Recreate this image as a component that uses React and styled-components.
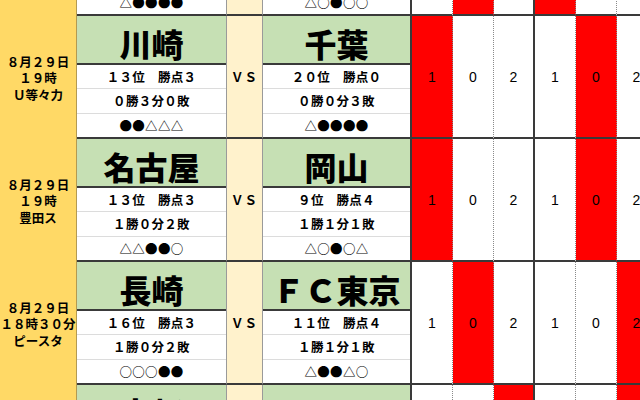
import React from "react";
import styled, { createGlobalStyle } from "styled-components";

const Global = createGlobalStyle`
  html, body { margin: 0; padding: 0; background: #fff; overflow: hidden; }
  body { width: 640px; height: 400px; }
  #root { height: 400px; overflow: hidden; }
`;

const JP = `"Noto Sans CJK JP", "Noto Sans", sans-serif`;
const DARK = "#3a3a3a";

const Sheet = styled.div`
  margin-top: -107px;
  width: 660px;
  display: flex;
  flex-direction: column;
  font-family: ${JP};
  color: #000;
`;

const Block = styled.div`
  display: grid;
  grid-template-columns: 77px 150px 36px 149px repeat(6, 41px);
  height: 123px;
`;

const DateCell = styled.div`
  background: #ffd966;
  border-right: 1px solid #b39a52;
  display: flex;
  flex-direction: column;
  align-items: center;
  justify-content: center;
  font-weight: 700;
  font-size: 12.5px;
  line-height: 16.5px;
  white-space: nowrap;
  overflow: hidden;
  padding-top: 2px;
`;

const TeamBox = styled.div`
  display: flex;
  flex-direction: column;
  border-right: ${(p) => (p.$strong ? `2px solid ${DARK}` : "1px solid #9a9a9a")};
  border-bottom: 2px solid ${DARK};
  min-width: 0;
`;

const NameCell = styled.div`
  height: 49px;
  flex: none;
  background: #c6e0b4;
  border-bottom: 2px solid ${DARK};
  display: flex;
  align-items: center;
  justify-content: center;
  padding-top: 7px;
  box-sizing: border-box;
  font-size: 32px;
  font-weight: 900;
  line-height: 1;
  white-space: nowrap;
  overflow: hidden;
`;

const InfoRow = styled.div`
  flex: 1;
  display: flex;
  align-items: center;
  justify-content: center;
  font-size: 12.5px;
  font-weight: 700;
  letter-spacing: 0.3px;
  white-space: nowrap;
  background: #fff;
  & + & { border-top: 1px solid #dcdcdc; }
`;

const VsCell = styled.div`
  background: #fff2cc;
  border-right: 1px solid #9a9a9a;
  border-bottom: 2px solid ${DARK};
  display: flex;
  align-items: center;
  justify-content: center;
  font-size: 12.5px;
  font-weight: 700;
  letter-spacing: 1px;
`;

const NumCell = styled.div`
  background: ${(p) => (p.$red ? "#ff0000" : "#fff")};
  border-bottom: 2px solid ${DARK};
  border-right: ${(p) => (p.$strong ? `2px solid ${DARK}` : "1px dotted #8a8a8a")};
  display: flex;
  align-items: center;
  justify-content: center;
  font-family: "Liberation Sans", Arial, sans-serif;
  font-size: 14px;
  padding-top: 1px;
  color: #000;
`;

const NUMS = ["1", "0", "2", "1", "0", "2"];

const blocks = [
  {
    date: [],
    left: { name: "", rank: "", rec: "", form: "△●●●●" },
    right: { name: "", rank: "", rec: "", form: "△○●○○" },
    red: [1, 3],
    show: false,
  },
  {
    date: ["８月２９日", "１９時", "Ｕ等々力"],
    left: { name: "川崎", rank: "１３位　勝点３", rec: "０勝３分０敗", form: "●●△△△" },
    right: { name: "千葉", rank: "２０位　勝点０", rec: "０勝０分３敗", form: "△●●●●" },
    red: [0, 4],
    show: true,
  },
  {
    date: ["８月２９日", "１９時", "豊田ス"],
    left: { name: "名古屋", rank: "１３位　勝点３", rec: "１勝０分２敗", form: "△△●●○" },
    right: { name: "岡山", rank: "９位　勝点４", rec: "１勝１分１敗", form: "△○●○△" },
    red: [0, 4],
    show: true,
  },
  {
    date: ["８月２９日", "１８時３０分", "ピースタ"],
    left: { name: "長崎", rank: "１６位　勝点３", rec: "１勝０分２敗", form: "○○○●●" },
    right: { name: "ＦＣ東京", rank: "１１位　勝点４", rec: "１勝１分１敗", form: "△●●△○" },
    red: [1, 5],
    show: true,
  },
  {
    date: [],
    left: { name: "京都", rank: "", rec: "", form: "" },
    right: { name: "", rank: "", rec: "", form: "" },
    red: [2, 5],
    show: false,
  },
];

function Team({ team, strong }) {
  return (
    <TeamBox $strong={strong}>
      <NameCell>{team.name}</NameCell>
      <InfoRow>{team.rank}</InfoRow>
      <InfoRow>{team.rec}</InfoRow>
      <InfoRow>{team.form}</InfoRow>
    </TeamBox>
  );
}

export default function App() {
  return (
    <>
      <Global />
      <Sheet>
        {blocks.map((b, i) => (
          <Block key={i}>
            <DateCell>
              {b.date.map((d, j) => (
                <div key={j}>{d}</div>
              ))}
            </DateCell>
            <Team team={b.left} />
            <VsCell>{b.show ? "ＶＳ" : ""}</VsCell>
            <Team team={b.right} strong />
            {NUMS.map((n, k) => (
              <NumCell key={k} $red={b.red.includes(k)} $strong={k === 2 || k === 5}>
                {b.show ? n : ""}
              </NumCell>
            ))}
          </Block>
        ))}
      </Sheet>
    </>
  );
}
